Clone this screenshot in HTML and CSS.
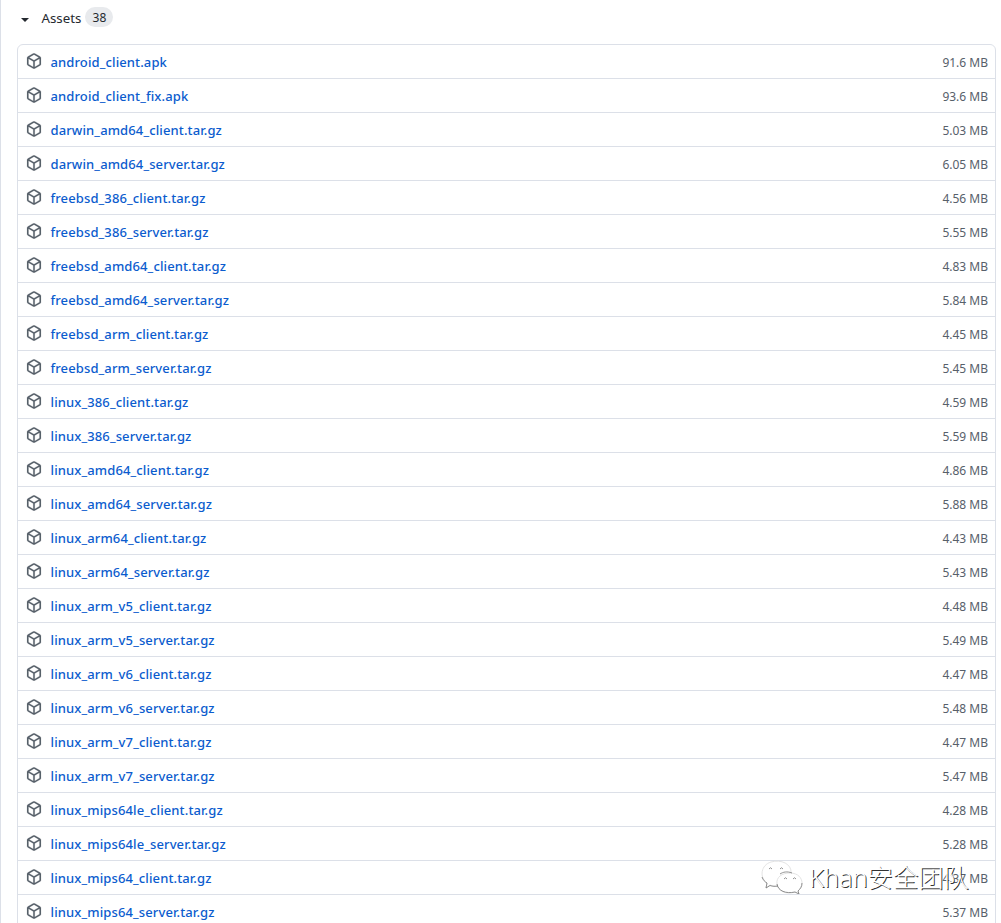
FILE: index.html
```
<!DOCTYPE html>
<html lang="en">
<head>
<meta charset="utf-8">
<title>Assets</title>
<link rel="stylesheet" href="styles.css">
</head>
<body>
<main class="release">
  <header class="assets-header">
    <svg class="caret" viewBox="0 0 8 4"><path d="M0 0h8L4 4z"/></svg>
    <span class="assets-title">Assets</span>
    <span class="counter">38</span>
  </header>
  <ul class="assets" id="assets"></ul>
</main>
<div class="watermark">
  <svg class="chat" viewBox="0 0 42 34">
    <path class="light" d="M17 26c-3 .5-6 0-8-1l-4 3 1-5C-2 17 0 5 10 2s21 2 20 11"/>
    <path class="light" d="M29 13c8 0 12 5 12 10 0 4-2 6-4 8l1 3-4-2c-9 3-17-1-18-8s5-11 13-11z"/>
    <path class="dark" d="M1 17c1 3 3 5 5 6l-1 5 4-2.500c3 1 5 1 8 .5M19 14c3-2 7-3 12-1M16 24c1 7 9 10 18 8l4 2-1-3c2-2 4-4 4-8"/>
    <path class="dark" d="M8 9q1.500-2.500 3 0M19 9q1.500-2.500 3 0M23 19q1.500-2.500 3 0M32 19q1.500-2.500 3 0"/>
  </svg>
  <span class="watermark-text">Khan安全团队</span>
</div>
<script src="assets.js"></script>
</body>
</html>
```
FILE: styles.css
```
body {
  margin: 0;
  height: 923px;
  overflow: hidden;
  background: #fff;
  color: #24292f;
  font-family: "Noto Sans", "Noto Sans CJK SC", sans-serif;
}
.release {
  box-sizing: border-box;
  height: 923px;
  padding: 0 5px 0 16px;
  border-left: 1px solid #dce0e8;
  overflow: hidden;
}
.assets-header {
  display: flex;
  align-items: center;
  height: 36px;
  margin-bottom: 8px;
  padding-left: 4px;
}
.caret {
  width: 8px;
  height: 4px;
  margin-top: 3px;
  fill: #24292f;
}
.assets-title {
  margin-left: 12.500px;
  font-size: 13.300px;
}
.counter {
  box-sizing: border-box;
  width: 28px;
  height: 20px;
  margin: -2px 0 0 4px;
  border-radius: 10px;
  background: #e8eaed;
  font-size: 12px;
  line-height: 21px;
  text-align: center;
}
.assets {
  margin: 0;
  padding: 0;
  border: 1px solid #dce0e8;
  border-radius: 6px;
  list-style: none;
}
.asset {
  display: flex;
  align-items: center;
  box-sizing: border-box;
  height: 34px;
  padding: 0 7px 0 8px;
  border-bottom: 1px solid #dce0e8;
}
.package {
  width: 16px;
  height: 16px;
  margin: -1px 8.500px 0 0;
  fill: #57606a;
  stroke: #57606a;
  stroke-width: .15;
}
.asset-name {
  color: #0b5cce;
  font-size: 13px;
  font-weight: 500;
  letter-spacing: 0.120px;
  text-decoration: none;
}
.asset-size {
  margin: 2px 0 0 auto;
  color: #57606a;
  font-size: 12px;
}
.watermark {
  position: absolute;
  left: 761px;
  top: 860px;
  display: flex;
}
.chat {
  width: 42px;
  height: 34px;
  fill: #fff;
  stroke-width: 1;
}
.light { stroke: #e4e4e4; }
.dark { fill: none; stroke: #777; stroke-width: .8; }
.watermark-text {
  margin: -1px 0 0 6px;
  color: #fff;
  font-size: 25.300px;
  font-weight: 300;
  line-height: 36px;
  text-shadow: 1px 1px 0 #333;
  white-space: nowrap;
}
```
FILE: assets.js
```
const assets = [
  ["android_client.apk", "91.6"],
  ["android_client_fix.apk", "93.6"],
  ["darwin_amd64_client.tar.gz", "5.03"],
  ["darwin_amd64_server.tar.gz", "6.05"],
  ["freebsd_386_client.tar.gz", "4.56"],
  ["freebsd_386_server.tar.gz", "5.55"],
  ["freebsd_amd64_client.tar.gz", "4.83"],
  ["freebsd_amd64_server.tar.gz", "5.84"],
  ["freebsd_arm_client.tar.gz", "4.45"],
  ["freebsd_arm_server.tar.gz", "5.45"],
  ["linux_386_client.tar.gz", "4.59"],
  ["linux_386_server.tar.gz", "5.59"],
  ["linux_amd64_client.tar.gz", "4.86"],
  ["linux_amd64_server.tar.gz", "5.88"],
  ["linux_arm64_client.tar.gz", "4.43"],
  ["linux_arm64_server.tar.gz", "5.43"],
  ["linux_arm_v5_client.tar.gz", "4.48"],
  ["linux_arm_v5_server.tar.gz", "5.49"],
  ["linux_arm_v6_client.tar.gz", "4.47"],
  ["linux_arm_v6_server.tar.gz", "5.48"],
  ["linux_arm_v7_client.tar.gz", "4.47"],
  ["linux_arm_v7_server.tar.gz", "5.47"],
  ["linux_mips64le_client.tar.gz", "4.28"],
  ["linux_mips64le_server.tar.gz", "5.28"],
  ["linux_mips64_client.tar.gz", "4.37"],
  ["linux_mips64_server.tar.gz", "5.37"]
];
const icon = '<svg class="package" viewBox="0 0 16 16"><path fill-rule="evenodd" d="M8.878.392a1.75 1.75 0 0 0-1.756 0l-5.25 3.045A1.75 1.75 0 0 0 1 4.951v6.098c0 .624.332 1.200.872 1.514l5.250 3.045a1.750 1.750 0 0 0 1.756 0l5.250-3.045c.540-.313.872-.890.872-1.514V4.951c0-.624-.332-1.200-.872-1.514L8.878.392zM7.875 1.690a.250.250 0 0 1 .250 0l4.630 2.685L8 7.133 3.245 4.375l4.630-2.685zM2.500 5.677v5.372c0 .090.047.171.125.216l4.625 2.683V8.432L2.500 5.677zm6.250 8.271l4.625-2.683a.250.250 0 0 0 .125-.216V5.677L8.750 8.432v5.516z"/></svg>';
document.getElementById("assets").innerHTML = assets.map(([name, size]) =>
  `<li class="asset">${icon}<a class="asset-name" href="#">${name}</a><span class="asset-size">${size} MB</span></li>`
).join("");
```
